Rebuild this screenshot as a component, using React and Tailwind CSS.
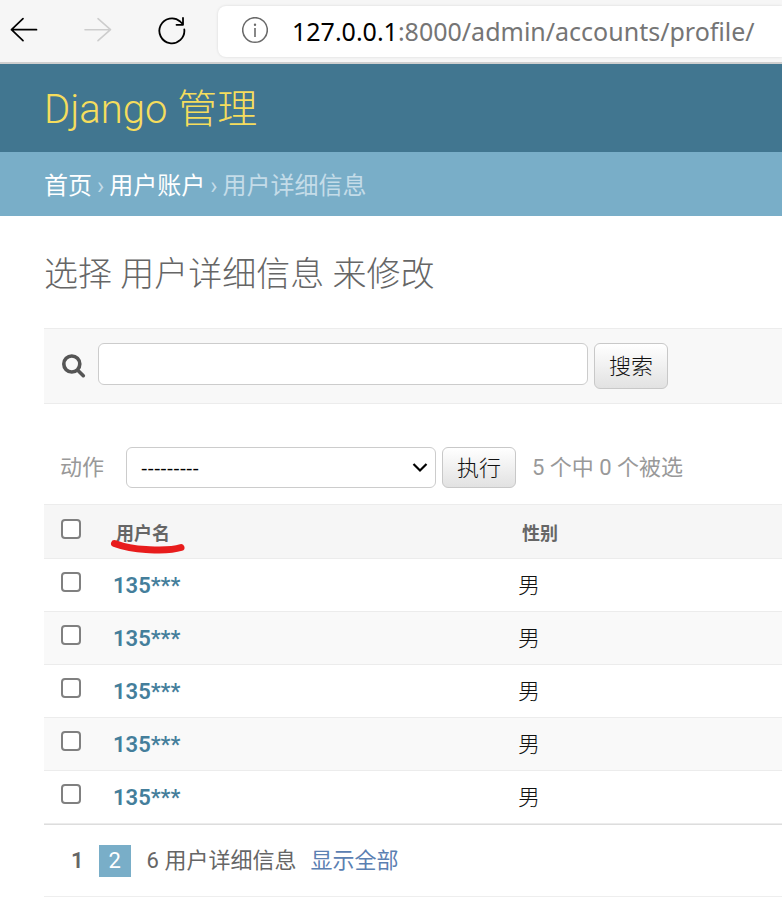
const profiles = [
  { id: 1, username: "135***", gender: "男" },
  { id: 2, username: "135***", gender: "男" },
  { id: 3, username: "135***", gender: "男" },
  { id: 4, username: "135***", gender: "男" },
  { id: 5, username: "135***", gender: "男" },
];

const buttonClass =
  "w-[74px] shrink-0 rounded-md border border-[#c8c8c8] bg-linear-to-b from-white to-[#e2e2e2] pt-[2px] text-[22px] leading-8 font-light text-[#111]";

function BrowserBar() {
  return (
    <div className="flex h-16 items-center border-b-2 border-[#cfcfcf] bg-[#f6f6f6] pl-[10px]">
      <button type="button" aria-label="Back" className="shrink-0">
        <svg width="28" height="28" viewBox="0 0 28 28" fill="none" stroke="#000" strokeWidth="1.7" strokeLinecap="round" strokeLinejoin="round">
          <path d="M26.500 12.700H1.500M13 1.700 1.500 12.700 13 23.700" />
        </svg>
      </button>
      <button type="button" aria-label="Forward" disabled className="ml-[46px] shrink-0">
        <svg width="28" height="28" viewBox="0 0 28 28" fill="none" stroke="#cdcdcd" strokeWidth="1.6" strokeLinecap="round" strokeLinejoin="round">
          <path d="M1 12.700H26.500M14 1.700 26.500 12.700 14 23.700" />
        </svg>
      </button>
      <button type="button" aria-label="Reload" className="ml-[46px] shrink-0">
        <svg width="28" height="28" viewBox="0 0 28 28" fill="none" stroke="#000" strokeWidth="1.8" strokeLinecap="round" strokeLinejoin="round">
          <path d="M26.300 12.500A12.500 12.500 0 1 1 22.200 4.500L25 7.500M25 .900V7.800H18.500" />
        </svg>
      </button>
      <div className="ml-8 flex h-[51px] min-w-0 grow items-center rounded-l-lg bg-white pl-6 shadow-[0_0_3px_rgba(0,0,0,0.12)]">
        <svg className="shrink-0" width="26" height="28" viewBox="0 0 26 28" fill="none" stroke="#6a6a6a" strokeWidth="1.6">
          <circle cx="13" cy="13" r="12.300" />
          <path d="M13 11V20" />
          <circle cx="13" cy="7.800" r="1.200" fill="#6a6a6a" stroke="none" />
        </svg>
        <span className="ml-6 text-[25px] leading-8 whitespace-nowrap text-[#757575] font-['Noto_Sans','Open_Sans',sans-serif]">
          <span className="text-black">127.0.0.1</span>:8000/admin/accounts/profile/
        </span>
      </div>
    </div>
  );
}

function Toolbar() {
  return (
    <form className="flex h-[76px] items-start border-y border-[#ececec] bg-[#f8f8f8] pt-[14px] pl-[17px]" onSubmit={(e) => e.preventDefault()}>
      <label htmlFor="searchbar" aria-label="搜索" className="mt-[10px] shrink-0">
        <svg width="26" height="26" viewBox="0 0 26 26" fill="none" stroke="#555" strokeLinecap="round">
          <circle cx="10.800" cy="11" r="8" strokeWidth="3.600" />
          <path d="M17.500 18 22.300 22.700" strokeWidth="3.600" />
        </svg>
      </label>
      <input id="searchbar" type="text" className="ml-[11px] h-[42px] w-[490px] rounded-md border border-[#ccc] bg-white px-2 text-[22px]" />
      <button type="submit" className={`ml-[6px] h-[46px] ${buttonClass}`}>搜索</button>
    </form>
  );
}

function Actions() {
  return (
    <div className="mt-[43px] flex items-center pl-4 text-[22px] leading-8 text-[#999]">
      <label htmlFor="action" className="shrink-0">动作</label>
      <div className="relative ml-[22px] w-[310px]">
        <select id="action" className="block h-[41px] w-full appearance-none rounded-md border border-[#ccc] bg-white pl-[14px] text-xl text-black font-['Open_Sans',sans-serif]">
          <option>---------</option>
        </select>
        <svg className="pointer-events-none absolute top-[15px] right-2" width="16" height="12" viewBox="0 0 16 12" fill="none" stroke="#000" strokeWidth="2.200">
          <path d="M1.500 2 8 8.500 14.500 2" />
        </svg>
      </div>
      <button type="button" className={`ml-[6px] h-[41px] ${buttonClass}`}>执行</button>
      <span className="ml-4 whitespace-nowrap">5 个中 0 个被选</span>
    </div>
  );
}

function Checkbox({ label }) {
  return (
    <input type="checkbox" aria-label={label} className="block size-5 appearance-none rounded-[4px] border-2 border-[#808080] bg-white checked:bg-[#79aec8]" />
  );
}

function Results() {
  return (
    <table className="mt-4 w-full table-fixed border-collapse text-left">
      <thead>
        <tr className="h-[54px] border-y border-[#ececec] bg-[#f6f6f6] text-lg text-[#666]">
          <th className="w-14 pb-[6px] pl-[17px]"><Checkbox label="全选" /></th>
          <th className="w-[55%] pt-1 pl-4 font-bold">
            <span className="relative inline-block">
              用户名
              <svg className="pointer-events-none absolute top-[19px] left-[-6px]" width="76" height="16" viewBox="0 0 76 16" fill="none" stroke="#e81c1c" strokeWidth="7" strokeLinecap="round" strokeLinejoin="round">
                <path d="M4.500 4.500C14 8 24 10 36 10.500C48 11 60 12 71 8.500" />
              </svg>
            </span>
          </th>
          <th className="pt-1 pl-4 font-bold">性别</th>
        </tr>
      </thead>
      <tbody>
        {profiles.map((profile) => (
          <tr key={profile.id} className="h-[53px] border-b border-[#ececec] text-[22px] leading-8 even:bg-[#f9f9f9]">
            <td className="pb-[6px] pl-[17px]"><Checkbox label={`选择 ${profile.id}`} /></td>
            <th scope="row" className="pt-[2px] pl-[13px] font-semibold">
              <a href="#profile" className="text-[#447e9b]">{profile.username}</a>
            </th>
            <td className="pt-[2px] pl-3 font-light text-[#111]">{profile.gender}</td>
          </tr>
        ))}
      </tbody>
    </table>
  );
}

function Paginator() {
  return (
    <nav className="flex h-[73px] items-center border-t border-b border-t-[#ddd] border-b-[#eee] pl-[27px] text-[22px] leading-8 text-[#666]">
      <span className="font-semibold">1</span>
      <a href="#page-2" className="ml-[15px] w-8 bg-[#79aec8] text-center text-white">2</a>
      <span className="ml-4">6 用户详细信息</span>
      <a href="#all" className="ml-[14px] text-[#5b80b2]">显示全部</a>
    </nav>
  );
}

export default function App() {
  return (
    <div lang="zh-CN" className="overflow-hidden bg-white font-[Roboto,'Noto_Sans_CJK_SC',sans-serif]">
      <BrowserBar />
      <header className="flex h-[88px] items-center bg-[#417690] pt-1 pl-11">
        <a href="#home" className="text-[40px] leading-[48px] font-light text-[#f5dd5d]">Django 管理</a>
      </header>
      <nav className="flex h-16 items-center gap-[5px] bg-[#79aec8] pt-1 pl-11 text-2xl text-[#c4dce8]">
        <a href="#home" className="text-white">首页</a>
        <span>›</span>
        <a href="#accounts" className="text-white">用户账户</a>
        <span>›</span>
        <span>用户详细信息</span>
      </nav>
      <main className="pl-11">
        <h1 className="pt-[34px] pb-[30px] text-[34px] leading-[48px] font-light text-[#666]">选择 用户详细信息 来修改</h1>
        <Toolbar />
        <Actions />
        <Results />
        <Paginator />
      </main>
    </div>
  );
}
